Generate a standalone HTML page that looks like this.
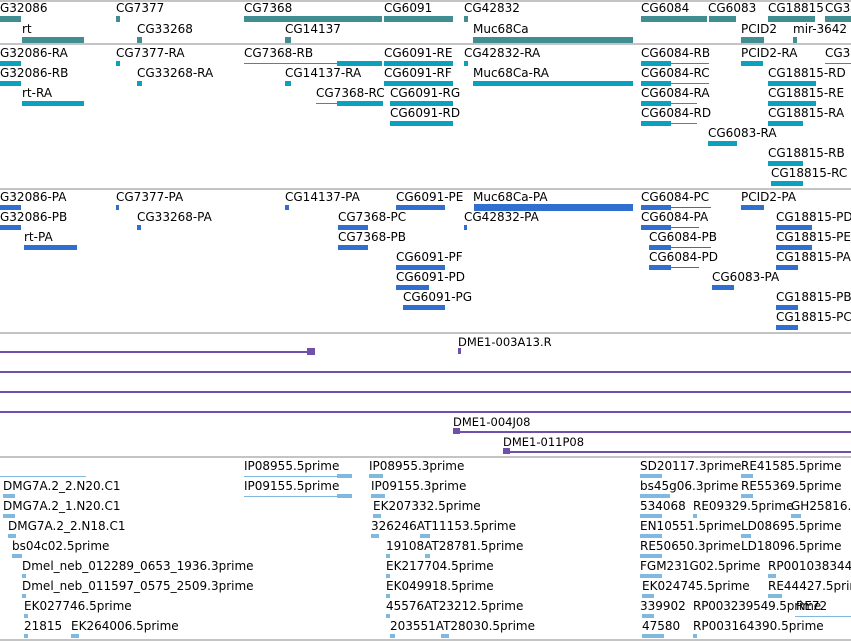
<!DOCTYPE html>
<html><head><meta charset="utf-8"><style>
html,body{margin:0;padding:0;background:#fff;width:851px;height:641px;overflow:hidden}
#w{position:relative;width:851px;height:641px;overflow:hidden}
.t{position:absolute;font:12px "DejaVu Sans","Liberation Sans",sans-serif;line-height:14px;color:#000;white-space:nowrap}
.b{position:absolute}
.g{background:#418e92;height:6px}
.r{background:#0aa0c0;height:5px}
.rl{background:#0aa0c0;height:1px}
.p{background:#2f6fd0;height:5px}
.pl{background:#2f6fd0;height:1px}
.c{background:#7050a8;height:2px}
.e{background:#80b8e0;height:4px}
.el{background:#80b8e0;height:1px}
.h{position:absolute;left:0;width:851px;height:2px;background:#c4c4c4}
</style></head><body><div id="w">
<div class="h" style="top:0"></div>
<div class="h" style="top:43px"></div>
<div class="h" style="top:188px"></div>
<div class="h" style="top:332px"></div>
<div class="h" style="top:456px"></div>
<div class="h" style="top:639px"></div>

<div class="t" style="left:0;top:1px">G32086</div>
<div class="t" style="left:116px;top:1px">CG7377</div>
<div class="t" style="left:244px;top:1px">CG7368</div>
<div class="t" style="left:384px;top:1px">CG6091</div>
<div class="t" style="left:464px;top:1px">CG42832</div>
<div class="t" style="left:641px;top:1px">CG6084</div>
<div class="t" style="left:708px;top:1px">CG6083</div>
<div class="t" style="left:768px;top:1px">CG18815</div>
<div class="t" style="left:825px;top:1px">CG3</div>
<div class="b g" style="left:0;top:16px;width:21px"></div>
<div class="b g" style="left:116px;top:16px;width:4px"></div>
<div class="b g" style="left:244px;top:16px;width:138px"></div>
<div class="b g" style="left:384px;top:16px;width:69px"></div>
<div class="b g" style="left:464px;top:16px;width:4px"></div>
<div class="b g" style="left:641px;top:16px;width:66px"></div>
<div class="b g" style="left:709px;top:16px;width:27px"></div>
<div class="b g" style="left:768px;top:16px;width:47px"></div>
<div class="b g" style="left:825px;top:16px;width:26px"></div>
<div class="t" style="left:22px;top:22px">rt</div>
<div class="t" style="left:137px;top:22px">CG33268</div>
<div class="t" style="left:285px;top:22px">CG14137</div>
<div class="t" style="left:473px;top:22px">Muc68Ca</div>
<div class="t" style="left:741px;top:22px">PCID2</div>
<div class="t" style="left:793px;top:22px">mir-3642</div>
<div class="b g" style="left:22px;top:37px;width:62px"></div>
<div class="b g" style="left:137px;top:37px;width:5px"></div>
<div class="b g" style="left:285px;top:37px;width:6px"></div>
<div class="b g" style="left:473px;top:37px;width:160px"></div>
<div class="b g" style="left:741px;top:37px;width:23px"></div>
<div class="b g" style="left:793px;top:37px;width:4px"></div>

<div class="t" style="left:0;top:46px">G32086-RA</div>
<div class="t" style="left:116px;top:46px">CG7377-RA</div>
<div class="t" style="left:244px;top:46px">CG7368-RB</div>
<div class="t" style="left:384px;top:46px">CG6091-RE</div>
<div class="t" style="left:464px;top:46px">CG42832-RA</div>
<div class="t" style="left:641px;top:46px">CG6084-RB</div>
<div class="t" style="left:741px;top:46px">PCID2-RA</div>
<div class="t" style="left:825px;top:46px">CG3</div>
<div class="b r" style="left:0;top:61px;width:21px"></div>
<div class="b r" style="left:116px;top:61px;width:4px"></div>
<div class="b rl" style="left:244px;top:63px;width:95px"></div>
<div class="b r" style="left:337px;top:61px;width:45px"></div>
<div class="b r" style="left:384px;top:61px;width:69px"></div>
<div class="b r" style="left:464px;top:61px;width:4px"></div>
<div class="b r" style="left:641px;top:61px;width:30px"></div>
<div class="b rl" style="left:671px;top:63px;width:38px"></div>
<div class="b r" style="left:741px;top:61px;width:22px"></div>
<div class="b rl" style="left:825px;top:63px;width:26px"></div>

<div class="t" style="left:0;top:66px">G32086-RB</div>
<div class="t" style="left:137px;top:66px">CG33268-RA</div>
<div class="t" style="left:285px;top:66px">CG14137-RA</div>
<div class="t" style="left:384px;top:66px">CG6091-RF</div>
<div class="t" style="left:473px;top:66px">Muc68Ca-RA</div>
<div class="t" style="left:641px;top:66px">CG6084-RC</div>
<div class="t" style="left:768px;top:66px">CG18815-RD</div>
<div class="b r" style="left:0;top:81px;width:21px"></div>
<div class="b r" style="left:137px;top:81px;width:5px"></div>
<div class="b r" style="left:285px;top:81px;width:6px"></div>
<div class="b r" style="left:384px;top:81px;width:69px"></div>
<div class="b r" style="left:473px;top:81px;width:160px"></div>
<div class="b r" style="left:641px;top:81px;width:30px"></div>
<div class="b rl" style="left:671px;top:83px;width:38px"></div>
<div class="b r" style="left:768px;top:81px;width:48px"></div>

<div class="t" style="left:22px;top:86px">rt-RA</div>
<div class="t" style="left:316px;top:86px">CG7368-RC</div>
<div class="t" style="left:390px;top:86px">CG6091-RG</div>
<div class="t" style="left:641px;top:86px">CG6084-RA</div>
<div class="t" style="left:768px;top:86px">CG18815-RE</div>
<div class="b r" style="left:22px;top:101px;width:62px"></div>
<div class="b rl" style="left:316px;top:103px;width:22px"></div>
<div class="b r" style="left:337px;top:101px;width:46px"></div>
<div class="b r" style="left:390px;top:101px;width:63px"></div>
<div class="b r" style="left:641px;top:101px;width:30px"></div>
<div class="b rl" style="left:671px;top:103px;width:26px"></div>
<div class="b r" style="left:768px;top:101px;width:48px"></div>

<div class="t" style="left:390px;top:106px">CG6091-RD</div>
<div class="t" style="left:641px;top:106px">CG6084-RD</div>
<div class="t" style="left:768px;top:106px">CG18815-RA</div>
<div class="b r" style="left:390px;top:121px;width:63px"></div>
<div class="b r" style="left:641px;top:121px;width:30px"></div>
<div class="b rl" style="left:671px;top:123px;width:26px"></div>
<div class="b r" style="left:768px;top:121px;width:35px"></div>

<div class="t" style="left:708px;top:126px">CG6083-RA</div>
<div class="b r" style="left:708px;top:141px;width:29px"></div>
<div class="t" style="left:768px;top:146px">CG18815-RB</div>
<div class="b r" style="left:768px;top:161px;width:35px"></div>
<div class="t" style="left:771px;top:166px">CG18815-RC</div>
<div class="b r" style="left:771px;top:181px;width:32px"></div>

<div class="t" style="left:0;top:190px">G32086-PA</div>
<div class="t" style="left:116px;top:190px">CG7377-PA</div>
<div class="t" style="left:285px;top:190px">CG14137-PA</div>
<div class="t" style="left:396px;top:190px">CG6091-PE</div>
<div class="t" style="left:473px;top:190px">Muc68Ca-PA</div>
<div class="t" style="left:641px;top:190px">CG6084-PC</div>
<div class="t" style="left:741px;top:190px">PCID2-PA</div>
<div class="b p" style="left:0;top:205px;width:21px"></div>
<div class="b p" style="left:116px;top:205px;width:3px"></div>
<div class="b p" style="left:285px;top:205px;width:4px"></div>
<div class="b p" style="left:396px;top:205px;width:49px"></div>
<div class="b p" style="left:474px;top:204px;width:159px;height:7px"></div>
<div class="b p" style="left:641px;top:205px;width:30px"></div>
<div class="b pl" style="left:671px;top:207px;width:40px"></div>
<div class="b p" style="left:741px;top:205px;width:23px"></div>

<div class="t" style="left:0;top:210px">G32086-PB</div>
<div class="t" style="left:137px;top:210px">CG33268-PA</div>
<div class="t" style="left:338px;top:210px">CG7368-PC</div>
<div class="t" style="left:464px;top:210px">CG42832-PA</div>
<div class="t" style="left:641px;top:210px">CG6084-PA</div>
<div class="t" style="left:776px;top:210px">CG18815-PD</div>
<div class="b p" style="left:0;top:225px;width:21px"></div>
<div class="b p" style="left:137px;top:225px;width:4px"></div>
<div class="b p" style="left:338px;top:225px;width:30px"></div>
<div class="b p" style="left:464px;top:225px;width:3px"></div>
<div class="b p" style="left:641px;top:225px;width:30px"></div>
<div class="b pl" style="left:671px;top:227px;width:28px"></div>
<div class="b p" style="left:776px;top:225px;width:36px"></div>

<div class="t" style="left:24px;top:230px">rt-PA</div>
<div class="t" style="left:338px;top:230px">CG7368-PB</div>
<div class="t" style="left:649px;top:230px">CG6084-PB</div>
<div class="t" style="left:776px;top:230px">CG18815-PE</div>
<div class="b p" style="left:24px;top:245px;width:53px"></div>
<div class="b p" style="left:338px;top:245px;width:30px"></div>
<div class="b p" style="left:649px;top:245px;width:22px"></div>
<div class="b pl" style="left:671px;top:247px;width:40px"></div>
<div class="b p" style="left:776px;top:245px;width:36px"></div>

<div class="t" style="left:396px;top:250px">CG6091-PF</div>
<div class="t" style="left:649px;top:250px">CG6084-PD</div>
<div class="t" style="left:776px;top:250px">CG18815-PA</div>
<div class="b p" style="left:396px;top:265px;width:49px"></div>
<div class="b p" style="left:649px;top:265px;width:22px"></div>
<div class="b pl" style="left:671px;top:267px;width:28px"></div>
<div class="b p" style="left:776px;top:265px;width:22px"></div>

<div class="t" style="left:396px;top:270px">CG6091-PD</div>
<div class="t" style="left:712px;top:270px">CG6083-PA</div>
<div class="b p" style="left:396px;top:285px;width:33px"></div>
<div class="b p" style="left:712px;top:285px;width:22px"></div>

<div class="t" style="left:403px;top:290px">CG6091-PG</div>
<div class="t" style="left:776px;top:290px">CG18815-PB</div>
<div class="b p" style="left:403px;top:305px;width:42px"></div>
<div class="b p" style="left:776px;top:305px;width:22px"></div>
<div class="t" style="left:776px;top:310px">CG18815-PC</div>
<div class="b p" style="left:776px;top:325px;width:22px"></div>

<div class="t" style="left:458px;top:335px;font-size:11.5px">DME1-003A13.R</div>
<div class="b c" style="left:0;top:351px;width:310px"></div>
<div class="b" style="left:307px;top:348px;width:8px;height:7px;background:#7050a8"></div>
<div class="b" style="left:458px;top:348px;width:3px;height:6px;background:#7050a8"></div>
<div class="b c" style="left:0;top:371px;width:851px"></div>
<div class="b c" style="left:0;top:391px;width:851px"></div>
<div class="b c" style="left:0;top:411px;width:851px"></div>
<div class="t" style="left:453px;top:415px;font-size:11.5px">DME1-004J08</div>
<div class="b c" style="left:453px;top:431px;width:398px"></div>
<div class="b" style="left:453px;top:428px;width:7px;height:6px;background:#7050a8"></div>
<div class="t" style="left:503px;top:435px;font-size:11.5px">DME1-011P08</div>
<div class="b c" style="left:503px;top:451px;width:348px"></div>
<div class="b" style="left:503px;top:448px;width:7px;height:6px;background:#7050a8"></div>

<div class="b el" style="left:0;top:476px;width:86px"></div>
<div class="t" style="left:244px;top:459px">IP08955.5prime</div>
<div class="t" style="left:369px;top:459px">IP08955.3prime</div>
<div class="t" style="left:640px;top:459px">SD20117.3prime</div>
<div class="t" style="left:741px;top:459px">RE41585.5prime</div>
<div class="b el" style="left:244px;top:476px;width:100px"></div>
<div class="b e" style="left:337px;top:474px;width:15px"></div>
<div class="b e" style="left:369px;top:474px;width:14px"></div>
<div class="b e" style="left:640px;top:474px;width:22px"></div>
<div class="b e" style="left:741px;top:474px;width:12px"></div>

<div class="t" style="left:3px;top:479px">DMG7A.2_2.N20.C1</div>
<div class="t" style="left:244px;top:479px">IP09155.5prime</div>
<div class="t" style="left:371px;top:479px">IP09155.3prime</div>
<div class="t" style="left:640px;top:479px">bs45g06.3prime</div>
<div class="t" style="left:741px;top:479px">RE55369.5prime</div>
<div class="b e" style="left:3px;top:494px;width:12px"></div>
<div class="b el" style="left:244px;top:496px;width:100px"></div>
<div class="b e" style="left:337px;top:494px;width:15px"></div>
<div class="b e" style="left:371px;top:494px;width:14px"></div>
<div class="b e" style="left:640px;top:494px;width:30px"></div>
<div class="b e" style="left:741px;top:494px;width:12px"></div>

<div class="t" style="left:3px;top:499px">DMG7A.2_1.N20.C1</div>
<div class="t" style="left:373px;top:499px">EK207332.5prime</div>
<div class="t" style="left:640px;top:499px">534068</div>
<div class="t" style="left:693px;top:499px">RE09329.5prime</div>
<div class="t" style="left:791px;top:499px">GH25816.5prime</div>
<div class="b e" style="left:3px;top:514px;width:12px"></div>
<div class="b e" style="left:373px;top:514px;width:8px"></div>
<div class="b e" style="left:640px;top:514px;width:22px"></div>
<div class="b e" style="left:693px;top:514px;width:4px"></div>
<div class="b e" style="left:791px;top:514px;width:10px"></div>

<div class="t" style="left:8px;top:519px">DMG7A.2_2.N18.C1</div>
<div class="t" style="left:371px;top:519px">326246AT11153.5prime</div>
<div class="t" style="left:640px;top:519px">EN10551.5prime</div>
<div class="t" style="left:741px;top:519px">LD08695.5prime</div>
<div class="b e" style="left:8px;top:534px;width:8px"></div>
<div class="b e" style="left:371px;top:534px;width:8px"></div>
<div class="b e" style="left:420px;top:534px;width:10px"></div>
<div class="b e" style="left:640px;top:534px;width:22px"></div>
<div class="b e" style="left:741px;top:534px;width:10px"></div>

<div class="t" style="left:12px;top:539px">bs04c02.5prime</div>
<div class="t" style="left:386px;top:539px">19108AT28781.5prime</div>
<div class="t" style="left:640px;top:539px">RE50650.3prime</div>
<div class="t" style="left:741px;top:539px">LD18096.5prime</div>
<div class="b e" style="left:12px;top:554px;width:10px"></div>
<div class="b e" style="left:386px;top:554px;width:4px"></div>
<div class="b e" style="left:425px;top:554px;width:5px"></div>
<div class="b e" style="left:640px;top:554px;width:22px"></div>

<div class="t" style="left:22px;top:559px">Dmel_neb_012289_0653_1936.3prime</div>
<div class="t" style="left:386px;top:559px">EK217704.5prime</div>
<div class="t" style="left:640px;top:559px">FGM231G02.5prime</div>
<div class="t" style="left:768px;top:559px">RP001038344</div>
<div class="b e" style="left:22px;top:574px;width:4px"></div>
<div class="b e" style="left:386px;top:574px;width:4px"></div>
<div class="b e" style="left:640px;top:574px;width:22px"></div>
<div class="b e" style="left:768px;top:574px;width:8px"></div>

<div class="t" style="left:22px;top:579px">Dmel_neb_011597_0575_2509.3prime</div>
<div class="t" style="left:386px;top:579px">EK049918.5prime</div>
<div class="t" style="left:642px;top:579px">EK024745.5prime</div>
<div class="t" style="left:768px;top:579px">RE44427.5prime</div>
<div class="b e" style="left:22px;top:594px;width:4px"></div>
<div class="b e" style="left:386px;top:594px;width:4px"></div>
<div class="b e" style="left:642px;top:594px;width:12px"></div>
<div class="b e" style="left:768px;top:594px;width:14px"></div>

<div class="t" style="left:24px;top:599px">EK027746.5prime</div>
<div class="t" style="left:386px;top:599px">45576AT23212.5prime</div>
<div class="t" style="left:640px;top:599px">339902</div>
<div class="t" style="left:693px;top:599px;letter-spacing:-0.15px">RP003239549.5prime</div>
<div class="t" style="left:796px;top:599px">RE72</div>
<div class="b e" style="left:24px;top:614px;width:4px"></div>
<div class="b e" style="left:386px;top:614px;width:4px"></div>
<div class="b e" style="left:642px;top:614px;width:12px"></div>
<div class="b el" style="left:795px;top:616px;width:56px"></div>

<div class="t" style="left:24px;top:619px">21815</div>
<div class="t" style="left:71px;top:619px">EK264006.5prime</div>
<div class="t" style="left:390px;top:619px">203551AT28030.5prime</div>
<div class="t" style="left:642px;top:619px">47580</div>
<div class="t" style="left:693px;top:619px">RP003164390.5prime</div>
<div class="b e" style="left:24px;top:634px;width:4px"></div>
<div class="b e" style="left:71px;top:634px;width:8px"></div>
<div class="b e" style="left:390px;top:634px;width:5px"></div>
<div class="b e" style="left:441px;top:634px;width:8px"></div>
<div class="b e" style="left:642px;top:634px;width:22px"></div>
<div class="b e" style="left:693px;top:634px;width:4px"></div>
</div></body></html>
